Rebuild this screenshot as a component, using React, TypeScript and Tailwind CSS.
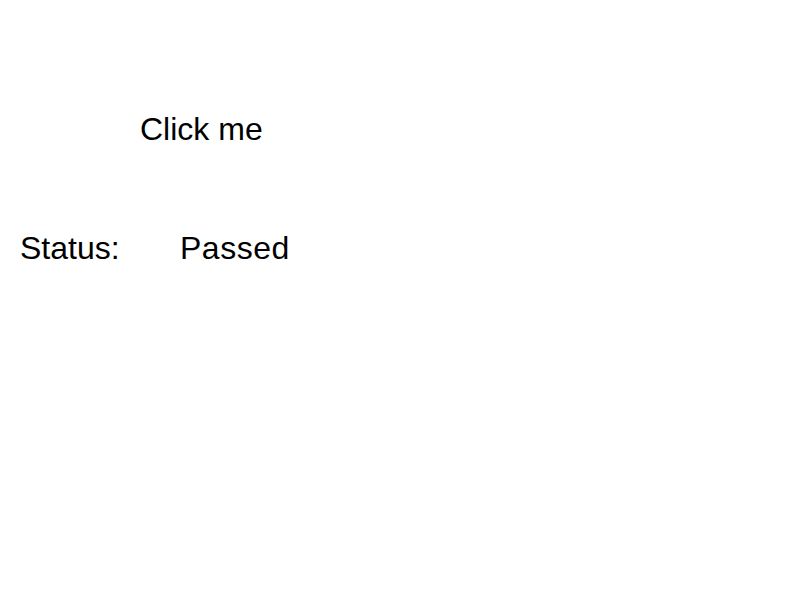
export default function App() {
  return (
    <div className="w-[800px] h-[600px] bg-white text-black font-['Liberation_Sans',Arial,sans-serif] text-[32px] leading-[37px]">
      <div className="pt-[111px] pl-[140px]">
        <button className="p-0 bg-transparent">Click me</button>
      </div>
      <div className="mt-[82px] pl-[20px] flex">
        <span className="w-[160px]">Status:</span>
        <span className="tracking-[0.5px]">Passed</span>
      </div>
    </div>
  );
}
